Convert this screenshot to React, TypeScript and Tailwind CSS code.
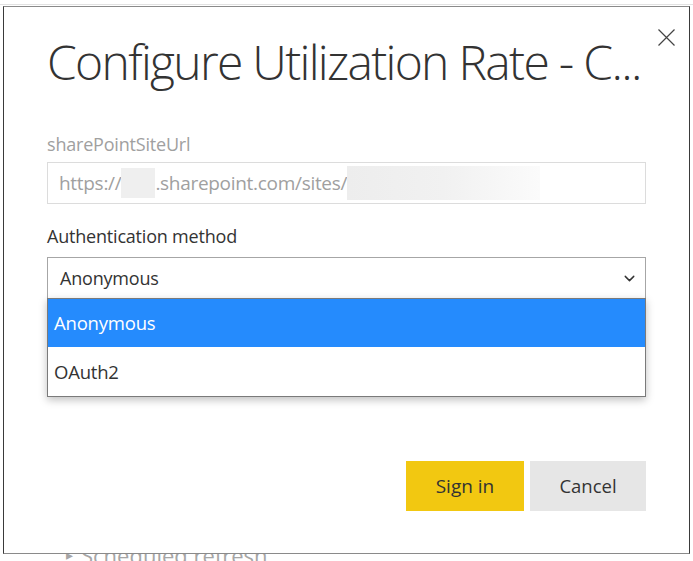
import { ChevronDown } from "lucide-react";

const font = { fontFamily: '"Open Sans", "Noto Sans", sans-serif' };

export default function App() {
  return (
    <div
      className="relative h-[561px] w-[693px] overflow-hidden bg-white"
      style={font}
    >
      <div className="h-[5px] border-b border-[#e2e2e2]" />
      <Dialog />
      {/* page text peeking out under the dialog */}
      <div className="-mt-[10px] flex items-center gap-2 pl-[66px] text-[22px] leading-none text-[#a6a6a6]">
        <span className="text-[14px]">▸</span>
        <span>Scheduled refresh</span>
      </div>
    </div>
  );
}

function Dialog() {
  return (
    <div className="relative z-10 ml-[3px] mt-[1px] h-[548px] w-[687px] border border-x-[#3a3a3a] border-y-[#8a8a8a] bg-white px-[43px]">
      <button className="absolute right-[14px] top-[22px] text-[#444]">
        <svg width="17" height="17" viewBox="0 0 17 17" fill="none" stroke="currentColor" strokeWidth="1.2">
          <path d="M0.5 0.5L16.5 16.5M16.5 0.5L0.5 16.5" />
        </svg>
      </button>

      <h1 className="mt-[26px] whitespace-nowrap text-[48px] font-light leading-[58px] tracking-[-1.7px] text-[#333]">
        Configure Utilization Rate - C...
      </h1>

      <label className="mt-[42px] block text-[18px] leading-[22px] tracking-[-0.2px] text-[#a0a0a0]">
        sharePointSiteUrl
      </label>
      <div className="mt-[7px] flex h-[42px] items-center border border-[#dcdcdc] px-[11px] text-[19px] tracking-[-0.3px] text-[#a0a0a0]">
        <span>https://</span>
        <span className="h-[30px] w-[34px] bg-[#efefef]" />
        <span>.sharepoint.com/sites/</span>
        <span className="h-[34px] w-[193px] bg-gradient-to-r from-[#ededed] via-[#f1f1f1] to-[#fbfbfb]" />
      </div>

      <label className="mt-[21px] block text-[18px] leading-[22px] tracking-[-0.2px] text-[#333]">
        Authentication method
      </label>
      <div className="relative mt-[10px]">
        <div className="flex h-[42px] items-center justify-between border border-[#a6a6a6] pl-[12px] pr-[7px] text-[18px] tracking-[-0.2px] text-[#333]">
          <span>Anonymous</span>
          <ChevronDown size={17} strokeWidth={2} className="text-[#333]" />
        </div>
        <ul className="absolute left-0 right-0 top-[41px] border border-[#7a7a7a] bg-white text-[18.5px] tracking-[-0.2px] shadow-[0_3px_8px_rgba(0,0,0,0.25)]">
          <li className="flex h-[48px] items-center bg-[#258bfd] pl-[6px] text-white">
            Anonymous
          </li>
          <li className="flex h-[49px] items-center pl-[6px] text-[#333]">
            OAuth2
          </li>
        </ul>
      </div>

      <div className="mt-[162px] flex justify-end gap-[6px]">
        <button className="h-[50px] w-[118px] bg-[#f2c811] text-[19px] text-[#333]">
          Sign in
        </button>
        <button className="h-[50px] w-[116px] bg-[#e6e6e6] text-[18.5px] text-[#333]">
          Cancel
        </button>
      </div>
    </div>
  );
}
